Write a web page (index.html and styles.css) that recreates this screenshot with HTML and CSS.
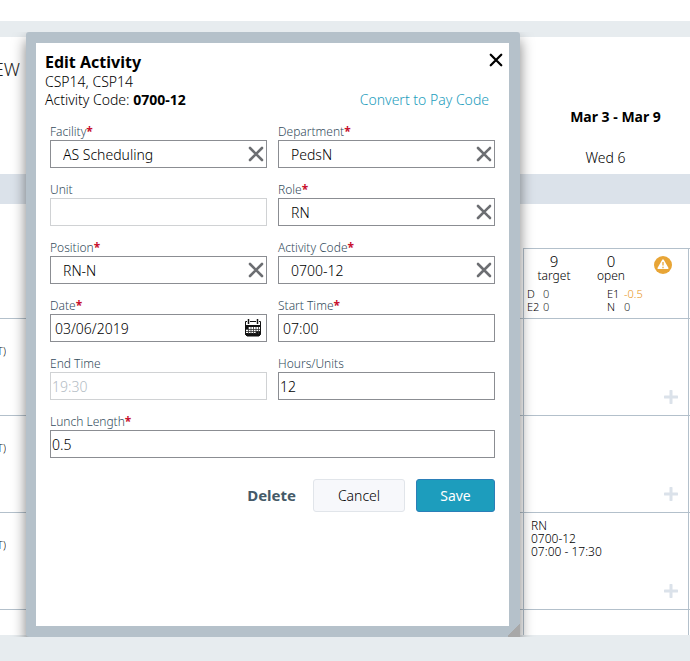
FILE: index.html
```html
<!DOCTYPE html>
<html lang="en">
<head>
<meta charset="utf-8">
<title>Edit Activity</title>
<link rel="stylesheet" href="styles.css">
</head>
<body>
<svg class="sprite" aria-hidden="true">
  <symbol id="x" viewBox="0 0 16 16"><path d="M2 2l12 12M14 2L2 14" fill="none" stroke="currentColor" stroke-width="2.600" stroke-linecap="round"/></symbol>
  <symbol id="plus" viewBox="0 0 14 14"><path d="M7 1v12M1 7h12" fill="none" stroke="currentColor" stroke-width="3" stroke-linecap="round"/></symbol>
</svg>
<div class="page">
  <header class="topbar"></header>
  <main class="schedule">
    <div class="heading">
      <div class="view"><span>EW</span></div>
      <div class="week"><strong>Mar 3 - Mar 9</strong><span>Wed 6</span></div>
    </div>
    <div class="band"></div>
    <div class="grid">
      <div class="row summary">
        <div class="person"></div>
        <div class="cell counts">
          <div class="totals">
            <div class="total"><span class="num">9</span><span>target</span></div>
            <div class="total"><span class="num">0</span><span>open</span></div>
            <svg class="warn" viewBox="0 0 18 18" aria-hidden="true"><circle cx="9" cy="9" r="9" fill="#e8a536"/><path d="M9 4.2L13.6 12.2H4.4Z" fill="#fff" stroke="#fff" stroke-width="1.8" stroke-linejoin="round"/><path d="M9 6v3.6M9 10.8v1.4" stroke="#e8a536" stroke-width="1.3"/></svg>
          </div>
          <div class="shifts">
            <b>D</b><i>0</i><b>E1</b><i class="low">-0.5</i>
            <b>E2</b><i>0</i><b>N</b><i>0</i>
          </div>
        </div>
        <div class="cell"></div>
      </div>
      <div class="row">
        <div class="person"><span>T)</span></div>
        <div class="cell"><button class="add" type="button" aria-label="Add"><svg><use href="#plus"/></svg></button></div>
        <div class="cell"></div>
      </div>
      <div class="row">
        <div class="person"><span>T)</span></div>
        <div class="cell"><button class="add" type="button" aria-label="Add"><svg><use href="#plus"/></svg></button></div>
        <div class="cell"></div>
      </div>
      <div class="row">
        <div class="person"><span>T)</span></div>
        <div class="cell"><p class="shift">RN<br>0700-12<br>07:00 - 17:30</p><button class="add" type="button" aria-label="Add"><svg><use href="#plus"/></svg></button></div>
        <div class="cell"></div>
      </div>
      <div class="row last">
        <div class="person"></div><div class="cell"></div><div class="cell"></div>
      </div>
    </div>
  </main>

  <section class="dialog" role="dialog" aria-labelledby="title">
    <div class="content">
      <div class="title"><h1 id="title">Edit Activity</h1><button class="close" type="button" aria-label="Close"><svg><use href="#x"/></svg></button></div>
      <p class="sub">CSP14, CSP14</p>
      <div class="sub split"><span>Activity Code: <strong>0700-12</strong></span><a href="#">Convert to Pay Code</a></div>
      <form>
        <div class="field"><label for="facility">Facility<em>*</em></label><div class="box"><input class="pick" id="facility" value="AS Scheduling"><button type="button" aria-label="Clear"><svg><use href="#x"/></svg></button></div></div>
        <div class="field"><label for="department">Department<em>*</em></label><div class="box"><input class="pick" id="department" value="PedsN"><button type="button" aria-label="Clear"><svg><use href="#x"/></svg></button></div></div>
        <div class="field"><label for="unit">Unit</label><div class="box off"><input id="unit" disabled></div></div>
        <div class="field"><label for="role">Role<em>*</em></label><div class="box"><input class="pick" id="role" value="RN"><button type="button" aria-label="Clear"><svg><use href="#x"/></svg></button></div></div>
        <div class="field"><label for="position">Position<em>*</em></label><div class="box"><input class="pick" id="position" value="RN-N"><button type="button" aria-label="Clear"><svg><use href="#x"/></svg></button></div></div>
        <div class="field"><label for="code">Activity Code<em>*</em></label><div class="box"><input class="pick" id="code" value="0700-12"><button type="button" aria-label="Clear"><svg><use href="#x"/></svg></button></div></div>
        <div class="field"><label for="date">Date<em>*</em></label><div class="box"><input class="entry" id="date" value="03/06/2019"><button class="calendar" type="button" aria-label="Choose date"><svg viewBox="0 0 18 18"><path d="M1.500 2.500h15v13l-1.500 1.500h-12l-1.500-1.500z" fill="#fff" stroke="#111"/><path d="M1 6h16v2H1zM1 14h12v3H3l-2-1.500zM12 12h5v3l-2 2h-3zM1 8h3v2H1z" fill="#111"/><path d="M2 10.500h14M2 12.500h14M4.500 8v7M7 8v7M9.500 8v7M12 8v7M14.500 8v7" stroke="#333" stroke-width=".8"/><path d="M4.500 0v5M13.500 0v5" stroke="#fff" stroke-width="3"/><path d="M4.500 0v5M13.500 0v5" stroke="#111" stroke-width="1.500"/></svg></button></div></div>
        <div class="field"><label for="start">Start Time<em>*</em></label><div class="box"><input class="entry" id="start" value="07:00"></div></div>
        <div class="field"><label for="end">End Time</label><div class="box off"><input id="end" value="19:30" disabled></div></div>
        <div class="field"><label for="hours">Hours/Units</label><div class="box"><input id="hours" value="12"></div></div>
        <div class="field wide"><label for="lunch">Lunch Length<em>*</em></label><div class="box"><input id="lunch" value="0.5"></div></div>
        <div class="actions"><button class="delete" type="button">Delete</button><button class="cancel" type="button">Cancel</button><button class="save" type="submit">Save</button></div>
      </form>
    </div>
    <span class="grip"></span>
  </section>
</div>
</body>
</html>
```
FILE: styles.css
```css
* { box-sizing: border-box; }
body, h1, p { margin: 0; }
body { background: #e7ecef; color: #000; font: 300 14px/19px "Noto Sans", sans-serif; }
button, input { font: inherit; color: inherit; }
button { padding: 0; border: 0; background: none; cursor: pointer; }
strong { font-weight: 700; }
.sprite { display: none; }
.page { position: relative; display: flex; flex-direction: column; min-height: 100vh; padding-bottom: 26px; overflow: hidden; }
.topbar { height: 21px; margin-bottom: 16px; background: #fff; }
.schedule { flex: 1; display: flex; flex-direction: column; background: #fff; }

.heading { display: grid; grid-template-columns: minmax(0, 1fr) 167px; height: 137px; }
.view { display: flex; justify-content: flex-end; width: 20px; padding-top: 20px; overflow: hidden; color: #222; font-size: 18px; line-height: 24px; }
.week { display: flex; flex-direction: column; align-items: center; gap: 22px; padding: 70px 2px 0 0; }
.week strong { padding-left: 20px; }
.band { height: 30px; margin-bottom: 44px; background: #dbe2ea; }

.grid { flex: 1; display: flex; flex-direction: column; }
.row { display: grid; grid-template-columns: minmax(0, 1fr) 165px 2px; min-height: 97px; border-bottom: 1px solid #b3c0cb; }
.row.summary { min-height: 71px; border-top: 1px solid #b3c0cb; }
.row.last { flex: 1; min-height: 0; border-bottom: 0; }
.summary .person { margin-top: -1px; background: #fff; }
.person { padding-top: 24px; color: #222; font-size: 11px; line-height: 15px; }
.person span { display: flex; justify-content: flex-end; width: 6px; overflow: hidden; }
.cell { display: flex; flex-direction: column; border-left: 1px solid #b3c0cb; }
.shift { padding: 6px 7px 0; font-size: 12px; line-height: 13px; }
.add { align-self: flex-end; width: 14px; height: 14px; margin: auto 10px 11px; color: #dbe2ea; }
.add svg, .close svg, .box svg { display: block; width: 100%; height: 100%; }
.counts { padding: 5px 3px 0; font-size: 11px; line-height: 13px; }
.totals { display: grid; grid-template-columns: 54px 60px 1fr; align-items: start; }
.total { display: flex; flex-direction: column; align-items: center; font-size: 12px; line-height: 14px; }
.total .num { font-size: 15px; line-height: 15px; }
.warn { width: 18px; height: 18px; margin: 2px 0 0 13px; }
.shifts { display: grid; grid-template-columns: 16px 64px 17px 1fr; padding-top: 4px; }
.shifts b, .shifts i { font-weight: inherit; font-style: normal; }
.shifts i { color: #333; }
.shifts .low { color: #e8951a; }

.dialog { position: absolute; inset: 32px 170px 24px 26px; padding: 11px 11px 11px 10px; border-radius: 3px; background: #b5c1ca; box-shadow: 0 8px 14px rgba(0, 0, 0, .5); clip-path: inset(0 -20px 0 -20px); }
.content { height: 100%; padding: 8px 14px 0; background: #fff; }
.title { display: flex; justify-content: space-between; align-items: center; margin-left: -5px; line-height: 22px; }
.title h1 { font-size: 16px; }
.sub { margin-left: -5px; line-height: 18px; }
.close { width: 14px; height: 14px; margin: 0 -8px 4px 0; color: #000; }
.split { display: flex; justify-content: space-between; padding-right: 6px; }
a { color: #1d9dbd; text-decoration: none; }

form { display: grid; grid-template-columns: 1fr 1fr; gap: 14px 11px; padding-top: 15px; }
.field { display: flex; flex-direction: column; min-width: 0; }
.wide, .actions { grid-column: 1 / -1; }
label { color: #344c5c; font-size: 12px; line-height: 16px; }
em { color: #c8102e; font-style: normal; font-weight: 700; }
.box { display: flex; align-items: center; height: 28px; border: 1px solid #8b8d92; }
.box.off { border-color: #d0d2d4; }
input { flex: 1; min-width: 0; height: 100%; padding: 0 1px; border: 0; outline: 0; background: none; }
input.pick { padding-left: 12px; }
input.entry { padding-left: 4px; }
input:disabled { color: #b3bcc4; }
.box button { width: 16px; height: 16px; margin-right: 2px; color: #6c6e72; }
.box .calendar { width: 18px; height: 18px; margin-right: 4px; }

.actions { display: flex; justify-content: flex-end; padding-top: 7px; }
.actions button { height: 33px; border-radius: 3px; }
.actions .delete { margin-right: 17px; color: #455a68; font-size: 15px; font-weight: 700; }
.cancel { width: 92px; margin-right: 11px; border: 1px solid #e1e5ea; background: #f7f8fb; }
.actions .save { width: 79px; border: 1px solid #2b7fb8; background: #1d9dbd; color: #fff; font-weight: 400; }
.grip { position: absolute; right: 0; bottom: 0; width: 13px; height: 13px; background: linear-gradient(135deg, transparent 50%, #a8a8a8 50%); }
```
